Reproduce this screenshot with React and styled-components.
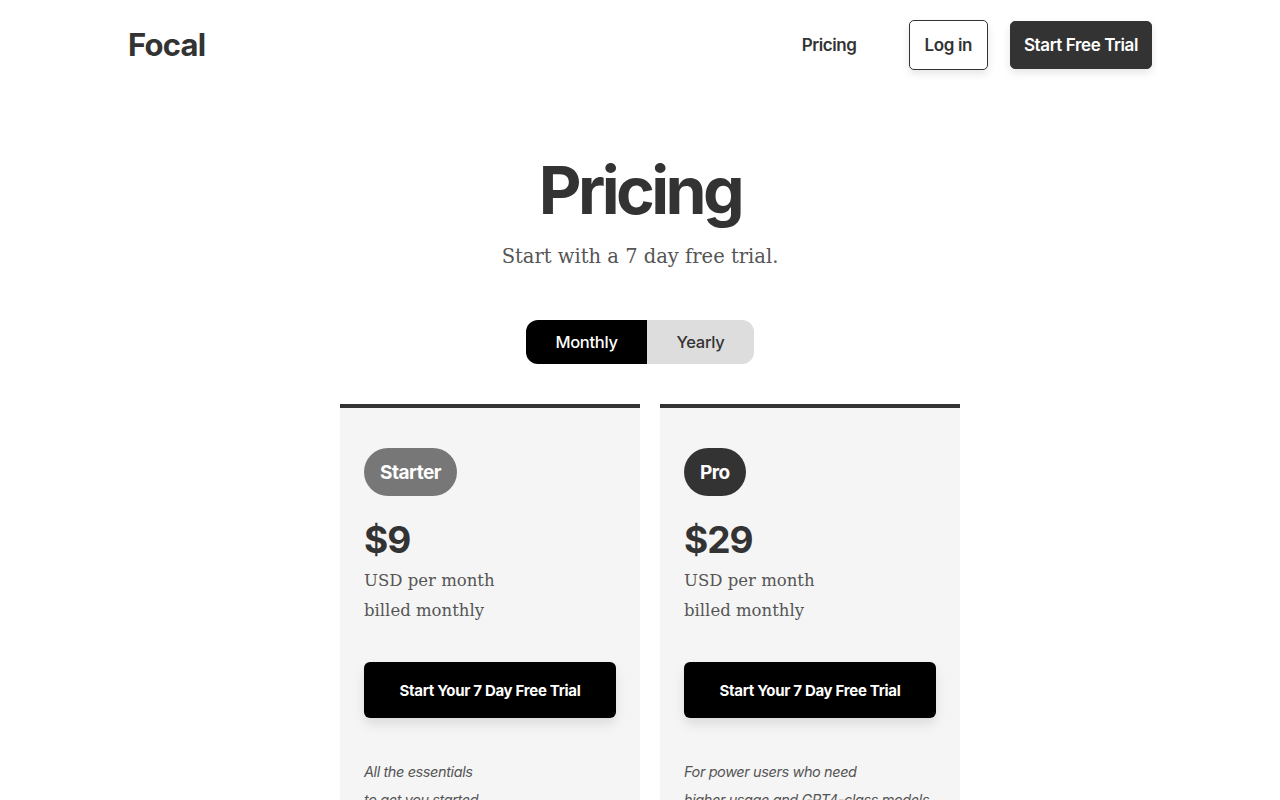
import React, { useState } from "react";
import styled, { createGlobalStyle } from "styled-components";

const GlobalStyle = createGlobalStyle`
  * { box-sizing: border-box; }
  body {
    margin: 0;
    background: #fff;
    color: #333;
    font-family: Inter, "Liberation Sans", sans-serif;
  }
`;

const sans = `Inter, "Liberation Sans", sans-serif`;
const serif = `"DejaVu Serif", "Liberation Serif", serif`;

const Page = styled.div`
  width: 1024px;
  margin: 0 auto;
`;

const Header = styled.header`
  height: 90px;
  display: flex;
  align-items: center;
  justify-content: space-between;
`;

const Logo = styled.a`
  font-family: ${sans};
  font-size: 31px;
  font-weight: 700;
  letter-spacing: -0.8px;
  color: #333;
  text-decoration: none;
  margin-top: -2px;
`;

const Nav = styled.nav`
  display: flex;
  align-items: center;
  gap: 22px;
`;

const NavLink = styled.a`
  font-size: 17px;
  font-weight: 600;
  letter-spacing: -0.4px;
  color: #333;
  text-decoration: none;
  margin-right: 30px;
`;

const NavButton = styled.button`
  font-family: ${sans};
  font-size: 17px;
  font-weight: 600;
  letter-spacing: -0.4px;
  height: ${(p) => (p.$primary ? "48px" : "50px")};
  padding: 0 ${(p) => (p.$primary ? "13px" : "15px")};
  border-radius: 5px;
  border: 1px solid #333;
  background: ${(p) => (p.$primary ? "#333" : "#fff")};
  color: ${(p) => (p.$primary ? "#fff" : "#333")};
  box-shadow: 0 4px 8px rgba(0, 0, 0, 0.1);
  cursor: pointer;
`;

const Hero = styled.section`
  display: flex;
  flex-direction: column;
  align-items: center;
  padding-top: 60px;
`;

const Title = styled.h1`
  margin: 0;
  font-size: 66px;
  font-weight: 700;
  letter-spacing: -3.6px;
  line-height: 80px;
  color: #333;
`;

const Subtitle = styled.p`
  margin: 15px 0 0;
  font-family: ${serif};
  font-size: 19.5px;
  color: #555;
`;

const Toggle = styled.div`
  display: flex;
  margin-top: 52px;
  border-radius: 12px;
  overflow: hidden;
`;

const ToggleOption = styled.button`
  font-family: ${sans};
  font-size: 16.5px;
  font-weight: 500;
  letter-spacing: -0.3px;
  height: 44px;
  width: ${(p) => p.$width}px;
  border: none;
  background: ${(p) => (p.$active ? "#000" : "#ddd")};
  color: ${(p) => (p.$active ? "#fff" : "#333")};
  cursor: pointer;
`;

const Plans = styled.div`
  display: flex;
  justify-content: center;
  gap: 20px;
  margin-top: 40px;
  padding-left: 20px;
`;

const Card = styled.div`
  width: 300px;
  background: #f5f5f5;
  border-top: 4px solid #333;
  padding: 40px 24px 24px;
`;

const Badge = styled.span`
  display: inline-flex;
  align-items: center;
  height: 48px;
  padding: 0 16px;
  border-radius: 24px;
  background: ${(p) => p.$color};
  color: #fff;
  font-size: 19px;
  font-weight: 700;
  letter-spacing: -0.5px;
`;

const Price = styled.div`
  margin-top: 22px;
  font-size: 37px;
  font-weight: 700;
  letter-spacing: -1px;
  line-height: 44px;
  color: #333;
`;

const PriceNote = styled.div`
  margin-top: 4px;
  font-family: ${serif};
  font-size: 16.5px;
  line-height: 30px;
  color: #555;
`;

const TrialButton = styled.button`
  display: block;
  width: 100%;
  height: 56px;
  margin-top: 36px;
  border: none;
  border-radius: 6px;
  background: #000;
  color: #fff;
  font-family: ${sans};
  font-size: 15px;
  font-weight: 700;
  letter-spacing: -0.3px;
  box-shadow: 0 6px 12px rgba(0, 0, 0, 0.1);
  cursor: pointer;
`;

const Description = styled.p`
  margin: 40px 0 0;
  font-size: 14.5px;
  font-style: italic;
  letter-spacing: -0.4px;
  line-height: 28px;
  color: #555;
`;

const plans = [
  {
    name: "Starter",
    color: "#777",
    price: "$9",
    lines: ["All the essentials", "to get you started"],
  },
  {
    name: "Pro",
    color: "#333",
    price: "$29",
    lines: ["For power users who need", "higher usage and GPT4-class models"],
  },
];

export default function App() {
  const [period, setPeriod] = useState("monthly");

  return (
    <>
      <GlobalStyle />
      <Page>
        <Header>
          <Logo href="#">Focal</Logo>
          <Nav>
            <NavLink href="#">Pricing</NavLink>
            <NavButton>Log in</NavButton>
            <NavButton $primary>Start Free Trial</NavButton>
          </Nav>
        </Header>

        <Hero>
          <Title>Pricing</Title>
          <Subtitle>Start with a 7 day free trial.</Subtitle>
          <Toggle>
            <ToggleOption
              $width={121}
              $active={period === "monthly"}
              onClick={() => setPeriod("monthly")}
            >
              Monthly
            </ToggleOption>
            <ToggleOption
              $width={107}
              $active={period === "yearly"}
              onClick={() => setPeriod("yearly")}
            >
              Yearly
            </ToggleOption>
          </Toggle>
        </Hero>

        <Plans>
          {plans.map((plan) => (
            <Card key={plan.name}>
              <Badge $color={plan.color}>{plan.name}</Badge>
              <Price>{plan.price}</Price>
              <PriceNote>
                USD per month
                <br />
                billed monthly
              </PriceNote>
              <TrialButton>Start Your 7 Day Free Trial</TrialButton>
              <Description>
                {plan.lines[0]}
                <br />
                {plan.lines[1]}
              </Description>
            </Card>
          ))}
        </Plans>
      </Page>
    </>
  );
}
